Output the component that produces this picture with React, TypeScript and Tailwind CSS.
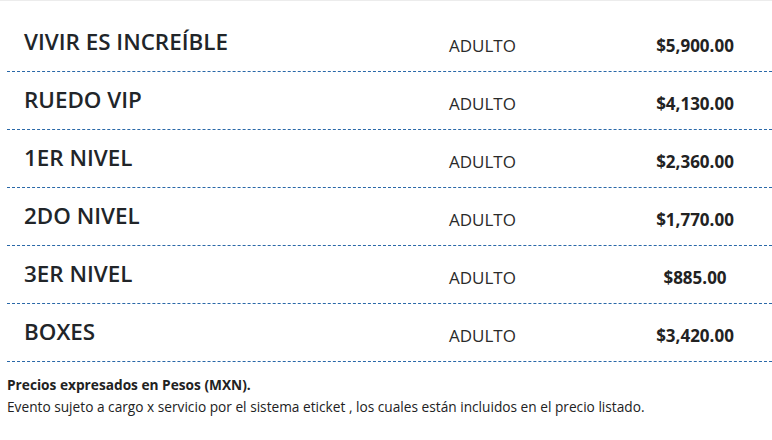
import React from "react";

const rows = [
  { name: "VIVIR ES INCREÍBLE", type: "ADULTO", price: "$5,900.00" },
  { name: "RUEDO VIP", type: "ADULTO", price: "$4,130.00" },
  { name: "1ER NIVEL", type: "ADULTO", price: "$2,360.00" },
  { name: "2DO NIVEL", type: "ADULTO", price: "$1,770.00" },
  { name: "3ER NIVEL", type: "ADULTO", price: "$885.00" },
  { name: "BOXES", type: "ADULTO", price: "$3,420.00" },
];

export default function App() {
  return (
    <div
      className="w-[772px] h-[440px] bg-white overflow-hidden border-t border-[#ececec]"
      style={{ fontFamily: '"Open Sans", "Noto Sans", sans-serif' }}
    >
      <div className="pl-[7px] pt-[13px]">
        {rows.map((r) => (
          <div
            key={r.name}
            className="flex items-center h-[58px] border-b border-dashed border-[#2a68a8]"
          >
            <div className="w-[442px] pl-[17px] text-[22.4px] leading-[30px] font-semibold text-[#212529] pb-[2px]">
              {r.name}
            </div>
            <div className="w-[170px] text-[17px] leading-[24px] text-[#2a2a2a] pt-[7px]">{r.type}</div>
            <div className="w-[152px] text-center text-[17px] leading-[24px] font-bold text-[#222] pt-[6px]">
              {r.price}
            </div>
          </div>
        ))}
        <div className="pt-[12px] text-[13.7px] leading-[22px] text-[#222]">
          <div className="font-bold">Precios expresados en Pesos (MXN).</div>
          <div>
            Evento sujeto a cargo x servicio por el sistema eticket , los cuales están incluidos en el precio listado.
          </div>
        </div>
      </div>
    </div>
  );
}
